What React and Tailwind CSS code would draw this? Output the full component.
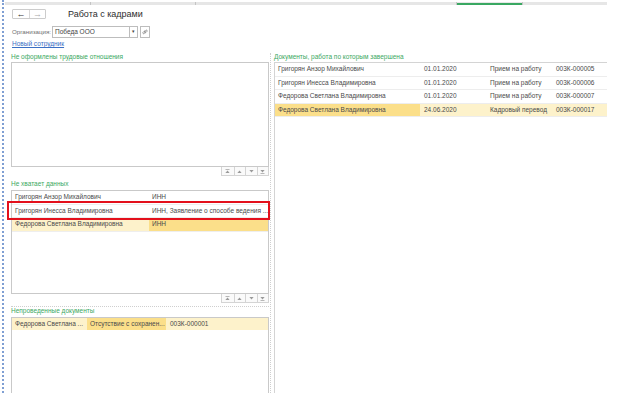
const font = { fontFamily: '"Liberation Sans", Arial, sans-serif' };

function Arrow({ dir }) {
  // small move buttons: top / up / down / bottom
  return (
    <svg width="5" height="5" viewBox="0 0 5 5" className="text-[#9a9a9a]">
      {dir === 'top' && <rect x="0.5" y="0.3" width="4" height="0.7" fill="currentColor" />}
      {(dir === 'top' || dir === 'up') && <polygon points="2.5,1.4 4.6,4 0.4,4" fill="currentColor" />}
      {(dir === 'down' || dir === 'bottom') && <polygon points="0.4,1 4.6,1 2.5,3.6" fill="currentColor" />}
      {dir === 'bottom' && <rect x="0.5" y="4" width="4" height="0.7" fill="currentColor" />}
    </svg>
  );
}

function MoveButtons() {
  return (
    <div className="flex justify-end h-[9px]">
      <div className="flex border border-t-0 border-[#d4d4d4] bg-[#fafafa]">
        {['top', 'up', 'down', 'bottom'].map((d, i) => (
          <div
            key={d}
            className={`w-[11.5px] h-full flex items-center justify-center ${i > 0 ? 'border-l border-[#d4d4d4]' : ''}`}
          >
            <Arrow dir={d} />
          </div>
        ))}
      </div>
    </div>
  );
}

function GroupTitle({ children }) {
  return <div className="h-[8px] leading-[8px] text-[6.5px] text-[#3aa862] whitespace-nowrap">{children}</div>;
}

const light = 'bg-[#fdf2cb]';
const dark = 'bg-[#fbdf8a]';

const missing = [
  { name: 'Григорян Анзор Михайлович', what: 'ИНН' },
  { name: 'Григорян Инесса Владимировна', what: 'ИНН, Заявление о способе ведения ...' },
  { name: 'Федорова Светлана Владимировна', what: 'ИНН', current: true },
];

const finished = [
  { name: 'Григорян Анзор Михайлович', date: '01.01.2020', kind: 'Прием на работу', num: '003К-000005' },
  { name: 'Григорян Инесса Владимировна', date: '01.01.2020', kind: 'Прием на работу', num: '003К-000006' },
  { name: 'Федорова Светлана Владимировна', date: '01.01.2020', kind: 'Прием на работу', num: '003К-000007' },
  { name: 'Федорова Светлана Владимировна', date: '24.06.2020', kind: 'Кадровый перевод', num: '003К-000017', current: true },
];

export default function App() {
  return (
    <div style={font} className="w-[620px] h-[393px] overflow-hidden bg-white flex text-[#4a4a4a]">
      {/* left edge of the form */}
      <div className="w-[5px] flex flex-col shrink-0">
        <div className="ml-[2px] flex-1 border-l-2 border-dotted border-[#7f9fd3]" />
      </div>

      <div className="flex-1 flex flex-col">
        {/* tab strip */}
        <div className="mt-[2px] w-[602px] h-[4px] bg-[#e6e6e6] flex">
          <div className="w-[85px]" />
          <div className="w-px bg-[#c4c4c4]" />
          <div className="w-[104px]" />
          <div className="w-px bg-[#c4c4c4]" />
          <div className="w-[260px]" />
          <div className="w-px bg-[#c4c4c4]" />
          <div className="w-[65px] h-[2px] mt-[1px] bg-[#3aa862]" />
          <div className="w-px bg-[#c4c4c4]" />
        </div>

        {/* header */}
        <div className="mt-[4px] pl-[7px] flex items-center h-[12px]">
          <div className="w-[34px] h-[10px] border border-[#cccccc] rounded-[1px] flex">
            <div className="w-1/2 flex items-center justify-center text-[9px] leading-none font-bold text-[#333]">←</div>
            <div className="w-1/2 border-l border-[#d8d8d8] flex items-center justify-center text-[9px] leading-none text-[#aaaaaa]">→</div>
          </div>
          <div className="ml-[22px] mt-[1px] text-[9px] leading-none text-[#2e2e2e]">Работа с кадрами</div>
        </div>

        {/* organisation */}
        <div className="mt-[7px] pl-[7px] flex items-center h-[12px]">
          <div className="w-[40px] text-[6.2px] text-[#707070] whitespace-nowrap">Организация:</div>
          <div className="w-[78px] h-[12px] border border-[#bdbdbd] flex items-center px-[2px] text-[6.5px] text-[#444]">
            Победа ООО
          </div>
          <div className="w-[8px] h-[12px] border border-l-0 border-[#bdbdbd] flex items-center justify-center text-[5px] text-[#444]">
            ▾
          </div>
          <div className="ml-[2px] w-[10px] h-[12px] border border-[#bdbdbd] flex items-center justify-center">
            <svg width="6" height="6" viewBox="0 0 6 6" fill="none" stroke="#7a7a7a" strokeWidth="0.7">
              <rect x="0.6" y="2.6" width="3" height="1.6" rx="0.8" transform="rotate(-45 2.1 3.4)" />
              <rect x="2.4" y="1.6" width="3" height="1.6" rx="0.8" transform="rotate(-45 3.9 2.4)" />
            </svg>
          </div>
        </div>

        <div className="mt-[2px] pl-[7px] text-[6.5px] leading-[8px] text-[#3b6fc4] underline">Новый сотрудник</div>

        {/* columns */}
        <div className="mt-[5px] flex">
          {/* left column */}
          <div className="ml-[6px] w-[260px] pr-[1px] border-r border-dotted border-[#cfcfcf] flex flex-col">
            <GroupTitle>Не оформлены трудовые отношения</GroupTitle>
            <div className="mt-[1px] h-[105px] border border-[#c9c9c9]" />
            <MoveButtons />

            <div className="mt-[4px]">
              <GroupTitle>Не хватает данных</GroupTitle>
            </div>
            <div className="mt-[2px] h-[104px] border border-[#c9c9c9] relative">
              {missing.map((r) => (
                <div key={r.name} className="h-[13.5px] grid grid-cols-[137px_1fr] text-[6.5px] border-b border-[#eeeeee]">
                  <div className={`pl-[3px] flex items-center whitespace-nowrap ${r.current ? light : ''}`}>{r.name}</div>
                  <div className={`pl-[3px] flex items-center whitespace-nowrap overflow-hidden ${r.current ? dark : ''}`}>{r.what}</div>
                </div>
              ))}
              <div className="absolute top-[10px] left-[-5px] w-[263px] h-[19px] border-2 border-[#e3101c]" />
            </div>
            <MoveButtons />

            <div className="mt-[3px] border-t border-dotted border-[#cfcfcf]" />
            <GroupTitle>Непроведенные документы</GroupTitle>
            <div className="mt-[2px] h-[110px] border border-[#c9c9c9]">
              <div className="h-[12px] grid grid-cols-[75px_79px_1fr] text-[6.5px]">
                <div className={`pl-[3px] flex items-center whitespace-nowrap ${light}`}>Федорова Светлана ...</div>
                <div className={`pl-[3px] flex items-center whitespace-nowrap ${dark}`}>Отсутствие с сохранен...</div>
                <div className={`pl-[4px] flex items-center whitespace-nowrap ${light}`}>003К-000001</div>
              </div>
            </div>
          </div>

          {/* right column */}
          <div className="ml-[3px] w-[333px] flex flex-col">
            <GroupTitle>Документы, работа по которым завершена</GroupTitle>
            <div className="mt-[1px] h-[360px] border-l border-t border-[#d4d4d4]">
              {finished.map((r) => (
                <div
                  key={r.num}
                  className="h-[13.5px] grid grid-cols-[145px_66px_66px_1fr] text-[6.5px] border-b border-[#ededed]"
                >
                  <div className={`pl-[3px] flex items-center whitespace-nowrap ${r.current ? dark : ''}`}>{r.name}</div>
                  <div className={`pl-[4px] flex items-center whitespace-nowrap ${r.current ? light : ''}`}>{r.date}</div>
                  <div className={`pl-[4px] flex items-center whitespace-nowrap ${r.current ? light : ''}`}>{r.kind}</div>
                  <div className={`pl-[4px] flex items-center whitespace-nowrap ${r.current ? light : ''}`}>{r.num}</div>
                </div>
              ))}
            </div>
          </div>
        </div>
      </div>
    </div>
  );
}
